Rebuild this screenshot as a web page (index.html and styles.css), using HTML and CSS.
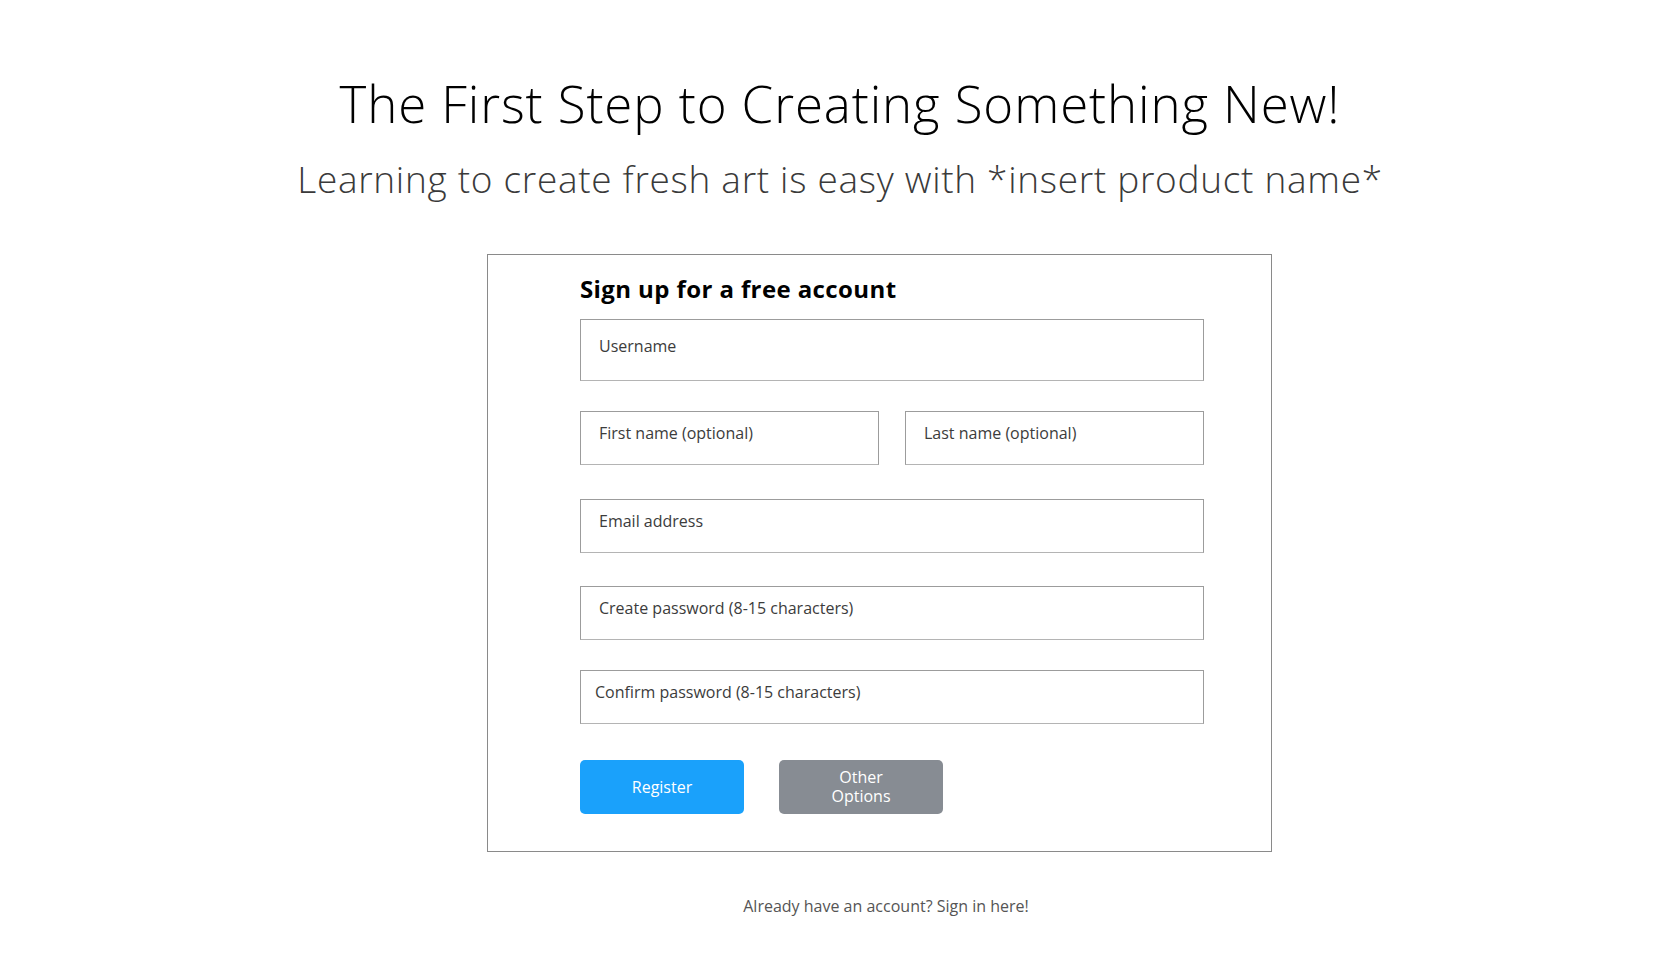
FILE: index.html
```html
<!DOCTYPE html>
<html lang="en">
<head>
<meta charset="utf-8">
<title>Sign up</title>
<link rel="stylesheet" href="styles.css">
</head>
<body>
  <header class="hero">
    <h1 class="hero-title">The First Step to Creating Something New!</h1>
    <p class="hero-sub">Learning to create fresh art is easy with *insert product name*</p>
  </header>
  <main class="signup">
    <form class="card">
      <h2 class="card-title">Sign up for a free account</h2>
      <input class="field field-tall" type="text" placeholder="Username">
      <div class="row">
        <input class="field" type="text" placeholder="First name (optional)">
        <input class="field" type="text" placeholder="Last name (optional)">
      </div>
      <input class="field field-email" type="email" placeholder="Email address">
      <input class="field field-pw" type="password" placeholder="Create password (8-15 characters)">
      <input class="field field-confirm" type="password" placeholder="Confirm password (8-15 characters)">
      <div class="actions">
        <button class="btn btn-primary" type="button">Register</button>
        <button class="btn btn-secondary" type="button">Other<br>Options</button>
      </div>
    </form>
    <p class="signin">Already have an account? Sign in here!</p>
  </main>
</body>
</html>
```

FILE: styles.css
```css
* { box-sizing: border-box; }
html, body { margin: 0; padding: 0; background: #fff; }
body {
  font-family: "Open Sans", "Liberation Sans", sans-serif;
  color: #000;
}
.hero {
  display: flex;
  flex-direction: column;
  align-items: center;
  padding-top: 72px;
}
.hero-title {
  margin: 0;
  font-size: 51px;
  font-weight: 300;
  line-height: 62px;
  letter-spacing: 0.9px;
  color: #000;
}
.hero-sub {
  margin: 23px 0 0;
  font-size: 37px;
  font-weight: 300;
  line-height: 44px;
  letter-spacing: 0.7px;
  color: #3a3a3a;
}
.signup {
  display: flex;
  flex-direction: column;
  align-items: center;
  padding-left: 79px;
  margin-top: 53px;
}
.card {
  width: 785px;
  border: 1px solid #8a8a8a;
  padding: 17px 67px 37px 92px;
  display: flex;
  flex-direction: column;
}
.card-title {
  margin: 0;
  font-size: 24px;
  font-weight: 700;
  line-height: 33px;
  letter-spacing: 0.4px;
  color: #000;
}
.field {
  display: block;
  width: 100%;
  height: 54px;
  border: 1px solid #9c9c9c;
  border-bottom-color: #b4b4b4;
  border-radius: 0;
  background: #fff;
  padding: 10px 18px 20px;
  font-family: inherit;
  font-size: 16px;
  color: #333;
  outline: none;
}
.field::placeholder { color: #3c3c3c; opacity: 1; }
.field-tall {
  height: 62px;
  margin-top: 14px;
  padding-top: 15px;
  padding-bottom: 23px;
}
.row {
  display: flex;
  gap: 26px;
  margin-top: 30px;
}
.row .field { flex: 1 1 0; width: auto; min-width: 0; }
.field-email { margin-top: 34px; }
.field-pw { margin-top: 33px; }
.field-confirm { margin-top: 30px; padding-left: 14px; }
.actions {
  display: flex;
  gap: 35px;
  margin-top: 36px;
}
.btn {
  width: 164px;
  height: 54px;
  border: 0;
  border-radius: 5px;
  color: #fff;
  font-family: inherit;
  font-size: 16px;
  line-height: 19px;
  padding: 0;
  cursor: pointer;
}
.btn-primary { background: #1aa1fb; }
.btn-secondary { background: #878c93; }
.signin {
  margin: 43px 0 0;
  padding-left: 13px;
  font-size: 16px;
  letter-spacing: 0;
  color: #555;
}
```
